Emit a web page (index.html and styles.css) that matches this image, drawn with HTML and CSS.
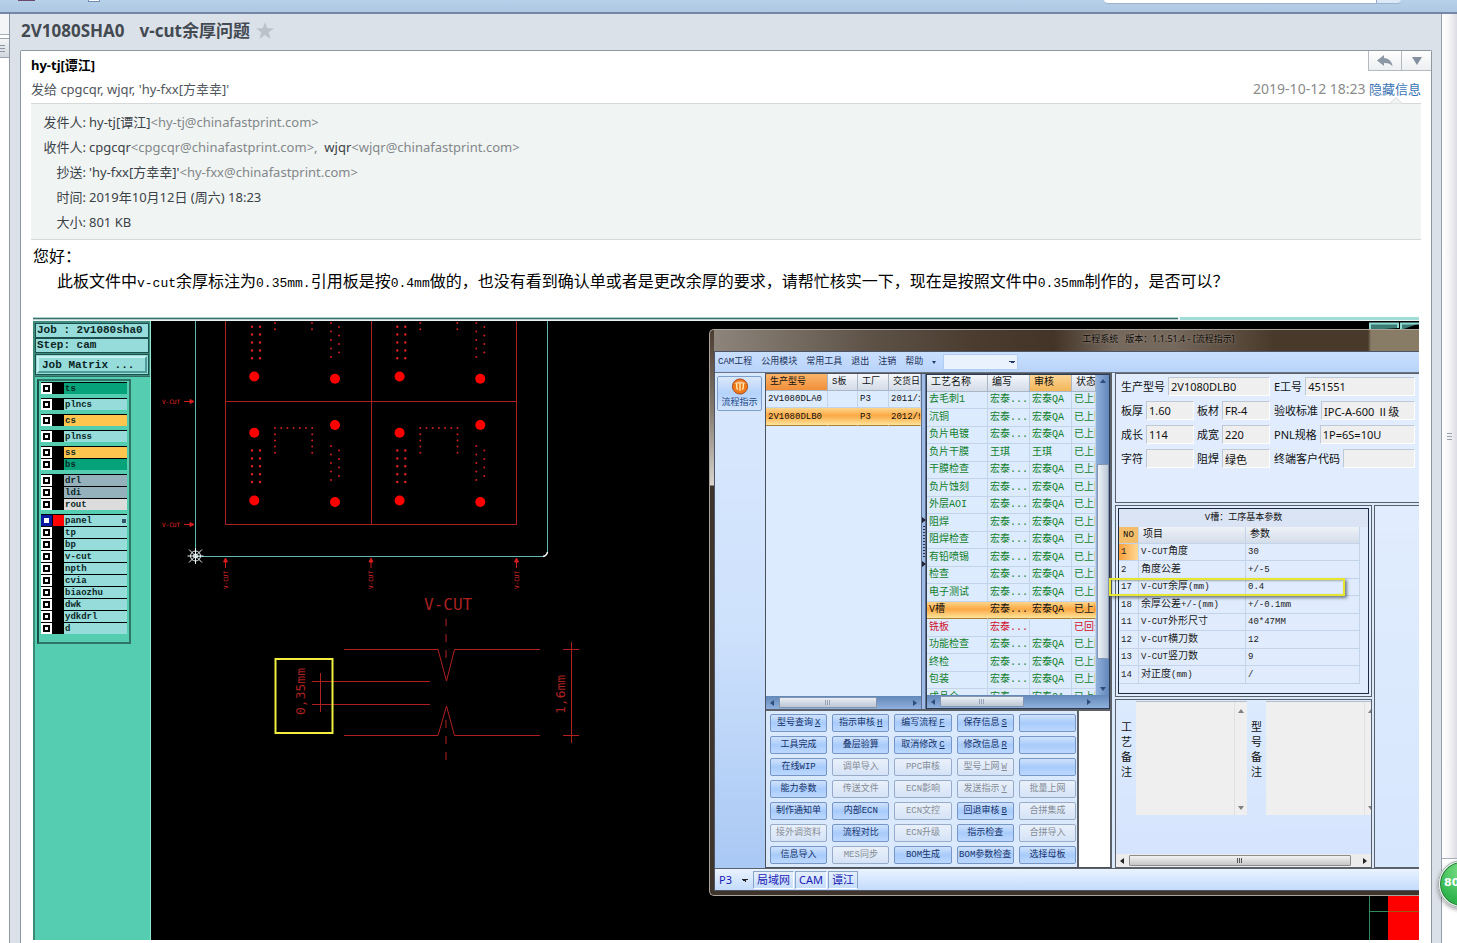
FILE: index.html
```
<!DOCTYPE html>
<html lang="zh-CN">
<head>
<meta charset="utf-8">
<title>2V1080SHA0 v-cut余厚问题</title>
<link rel="stylesheet" href="styles.css">
</head>
<body>
<header class="topbar">
  <span class="tb-mark"></span><span class="tb-box"></span><span class="tb-search"></span>
</header>
<div class="shell">
  <aside class="rail-left">
    <div class="rail-head"></div>
    <button class="rail-grip" aria-label="展开"><svg width="6" height="9" viewBox="0 0 6 9"><path d="M0 1.500h5M0 4.500h5M0 7.500h5" stroke="#8a95a5"/></svg></button>
  </aside>
  <main class="pane">
    <h1 class="subject"><span>2V1080SHA0</span><span>v-cut余厚问题</span>
      <svg width="18" height="18" viewBox="0 0 18 18"><path d="M9 0l2.300 6.200H18l-5.300 4.100L14.600 17 9 13 3.400 17l1.900-6.700L0 6.200h6.700z" fill="#bcc2ca"/></svg></h1>
    <article class="card">
      <div class="actions">
        <button aria-label="回复"><svg width="16" height="12" viewBox="0 0 16 12"><path d="M0 5.500L7 0v3c5 .300 8 3.500 8.600 8.500C13.500 8.700 11 7.800 7 8v3z" fill="#8c98a6"/></svg></button>
        <button aria-label="更多"><svg width="10" height="8" viewBox="0 0 10 8"><path d="M0 0h10L5 8z" fill="#8490a0"/></svg></button>
      </div>
      <div class="sender">hy-tj[谭江]</div>
      <div class="to-row"><span>发给 cpgcqr, wjqr, 'hy-fxx[方幸幸]'</span><span class="when"><time>2019-10-12 18:23</time> <a href="#info">隐藏信息</a></span></div>
      <section class="info" id="info">
        <svg class="notch" width="12" height="7" viewBox="0 0 12 7"><path d="M0 6.500L6 .500l6 6" fill="#f0f4f3" stroke="#d5d9d9"/></svg>
        <dl>
          <dt>发件人:</dt><dd>hy-tj[谭江]<em>&lt;hy-tj@chinafastprint.com&gt;</em></dd>
          <dt>收件人:</dt><dd>cpgcqr<em>&lt;cpgcqr@chinafastprint.com&gt;,</em>&nbsp; wjqr<em>&lt;wjqr@chinafastprint.com&gt;</em></dd>
          <dt>抄送:</dt><dd>'hy-fxx[方幸幸]'<em>&lt;hy-fxx@chinafastprint.com&gt;</em></dd>
          <dt>时间:</dt><dd>2019年10月12日 (周六) 18:23</dd>
          <dt>大小:</dt><dd>801 KB</dd>
        </dl>
      </section>
      <div class="letter">
        <p>您好：</p>
        <p class="indent">此板文件中<span class="lat">v-cut</span>余厚标注为<span class="lat">0.35mm.</span>引用板是按<span class="lat">0.4mm</span>做的，也没有看到确认单或者是更改余厚的要求，请帮忙核实一下，现在是按照文件中<span class="lat">0.35mm</span>制作的，是否可以？</p>
      </div>
      <div class="shot">
        <div class="strip"><span></span><span></span></div>
        <div class="cad">
          <div class="cam">
            <div class="job">
              <div class="job-line">Job : 2v1080sha0</div>
              <div class="job-line">Step: cam</div>
              <div class="job-btn"><button>Job Matrix ...</button></div>
            </div>
            <div class="layers">
              <div class="group"><label><input type="checkbox"><i></i><b class="green">ts</b></label></div>
              <div class="group"><label><input type="checkbox"><i></i><b>plncs</b></label></div>
              <div class="group"><label><input type="checkbox"><i></i><b class="gold">cs</b></label></div>
              <div class="group"><label><input type="checkbox"><i></i><b>plnss</b></label></div>
              <div class="group"><label><input type="checkbox"><i></i><b class="gold">ss</b></label><label><input type="checkbox"><i></i><b class="green">bs</b></label></div>
              <div class="group"><label><input type="checkbox"><i></i><b class="slate">drl</b></label><label><input type="checkbox"><i></i><b class="slate">ldi</b></label><label><input type="checkbox"><i></i><b class="pale">rout</b></label></div>
              <div class="group"><label class="current"><input type="checkbox" checked><i></i><b>panel<s></s></b></label><label><input type="checkbox"><i></i><b>tp</b></label><label><input type="checkbox"><i></i><b>bp</b></label><label><input type="checkbox"><i></i><b>v-cut</b></label><label><input type="checkbox"><i></i><b>npth</b></label><label><input type="checkbox"><i></i><b>cvia</b></label><label><input type="checkbox"><i></i><b>biaozhu</b></label><label><input type="checkbox"><i></i><b>dwk</b></label><label><input type="checkbox"><i></i><b>ydkdrl</b></label><label><input type="checkbox"><i></i><b>d</b></label></div>
            </div>
          </div>
          <svg class="board" width="560" height="619" viewBox="151 321 560 619">
            <defs>
              <g id="cell">
                <g fill="#f00"><circle cx="254.300" cy="376.500" r="5"/><circle cx="335" cy="378.700" r="5"/><circle cx="254.300" cy="432.700" r="5"/><circle cx="335" cy="425" r="5"/><circle cx="254.300" cy="500.500" r="5"/><circle cx="335" cy="502" r="5"/></g>
                <g stroke="#e02020" stroke-width="2.500" stroke-linecap="round" fill="none">
                  <path stroke-dasharray="0 7.900" d="M252 326.700V359M260 326.700V359M252 450.500V482.500M260 450.500V482.500"/>
                </g>
                <g stroke="#cc2020" stroke-width="2" stroke-linecap="round" fill="none">
                  <path stroke-dasharray="0 8.500" d="M331 323V358M339 327V353M331 446V481M339 450.500V477"/>
                  <path stroke-dasharray="0 6.200" d="M275 323V330M312 323V330M275 428H313M275 434.200V454M312.200 434.200V454"/>
                </g>
              </g>
              <path id="arrow" d="M0 0h6M6-2l4 2-4 2z" stroke="#d01c1c" fill="#e02020"/>
            </defs>
            <path d="M195.500 321V556.500H543Q547.500 556 547.500 551V321" fill="none" stroke="#5fb8b4"/>
            <path d="M543 556.500Q547 555.500 547.500 552" fill="none" stroke="#fff" stroke-width="1.500"/>
            <path d="M225.500 321V525M371.500 321V525M516.500 321V525M225 401.500H517M225 524.500H517" stroke="#a82222" fill="none"/>
            <use href="#cell"/><use href="#cell" x="145.300"/>
            <g stroke="#e8f4f4" fill="none"><circle cx="195.500" cy="556" r="5"/><circle cx="195.500" cy="556" r="2"/><path d="M187.500 556h16M195.500 548v16M189 549.500l13 13M202 549.500l-13 13"/></g>
            <use href="#arrow" x="184" y="401.500"/><use href="#arrow" x="184" y="524.500"/>
            <use href="#arrow" transform="translate(225.500 568) rotate(-90)"/><use href="#arrow" transform="translate(371 568) rotate(-90)"/><use href="#arrow" transform="translate(516.500 568) rotate(-90)"/>
            <g class="tiny">
              <text x="162" y="404">V-CUT</text><text x="162" y="527">V-CUT</text>
              <text transform="translate(228 589) rotate(-90)">V-CUT</text><text transform="translate(373 589) rotate(-90)">V-CUT</text><text transform="translate(519 589) rotate(-90)">V-CUT</text>
            </g>
            <path fill="none" stroke="#b02020" d="M344 649.500H438L446.500 681 454.500 649.500H540M344 735.500H438L446.500 706 454.500 735.500H540M312 681.500H430M312 704.500H430M320.500 673V712M571.500 642V743M563 649.500H579M563 735.500H579M446 618.500V626M446 634V642M446 650V658M446 720V728M446 736V744M446 752V760"/>
            <text class="big" x="424" y="610">V-CUT</text>
            <text class="dim" transform="translate(305 715) rotate(-90)">0,35mm</text>
            <text class="dim" transform="translate(565 714) rotate(-90)">1,6mm</text>
            <rect x="275.500" y="659" width="57" height="74" fill="none" stroke="#f2ee40" stroke-width="2"/>
          </svg>
          <svg class="corner" width="50" height="46" viewBox="0 0 50 46"><path d="M19 2h31v44H19z" fill="#f00"/><path d="M.500 0v46M0 17.500h50" stroke="#2f8a5a" fill="none"/><path d="M19 17.500h31" stroke="#a05a10"/></svg>
          <svg class="tabs" width="50" height="8" viewBox="0 0 50 8"><path d="M1 8V1.500h28V6M32 8V1.500h18" stroke="#8ed8d0" stroke-width="2" fill="#3c7a74"/></svg>
        </div>

        <section class="win">
          <div class="win-title"><span>工程系统&nbsp;&nbsp; 版本：1.1.51.4 - [流程指示]</span></div>
          <div class="win-body">
            <nav class="menu">
              <button><span class="n">CAM</span>工程</button><button>公用模块</button><button>常用工具</button><button>退出</button><button>注销</button><button>帮助</button><i class="caret"></i>
              <select aria-label="查找"><option></option></select>
            </nav>
            <div class="work">
              <div class="side">
                <button><svg width="18" height="18" viewBox="0 0 18 18"><circle cx="9" cy="9" r="8" fill="#ee7a1c" stroke="#a8441a"/><path d="M3 6a7 5 0 0 1 12 0z" fill="#fbc08a"/><path d="M5.500 5.500v4.500l1 2.500M9 5v8.500M12.500 5.500v4.500l-1 2.500" stroke="#ffe9a8" stroke-width="1.500" fill="none"/></svg><span>流程指示</span></button>
              </div>
              <div class="left">
                <div class="grids">
                  <div class="grid models">
                    <div class="view">
                      <table>
                        <colgroup><col style="width:62px"><col style="width:30px"><col style="width:31px"><col></colgroup>
                        <thead><tr><th class="hot">生产型号</th><th>S板</th><th>工厂</th><th>交货日</th></tr></thead>
                        <tbody><tr><td>2V1080DLA0</td><td></td><td>P3</td><td>2011/1</td></tr><tr class="sel"><td>2V1080DLB0</td><td></td><td>P3</td><td>2012/9</td></tr></tbody>
                      </table>
                    </div>
                    <div class="hbar"><i class="al"></i><span class="thumb"></span><i class="ar"></i></div>
                  </div>
                  <div class="split"><svg width="4" height="50" viewBox="0 0 4 50"><path d="M0 0l4 3-4 3zM0 44l4 3-4 3z" fill="#223"/><path d="M2 9V41" stroke="#334" stroke-width="2" stroke-dasharray="1 2"/></svg></div>
                  <div class="grid procs">
                    <div class="view">
                      <table>
                        <colgroup><col style="width:61px"><col style="width:42px"><col style="width:42px"><col></colgroup>
                        <thead><tr><th>工艺名称</th><th>编写</th><th class="warm">审核</th><th>状态</th></tr></thead>
                        <tbody>
                          <tr><td>去毛刺1</td><td>宏泰...</td><td>宏泰QA</td><td>已上网</td></tr>
                          <tr><td>沉铜</td><td>宏泰...</td><td>宏泰QA</td><td>已上网</td></tr>
                          <tr><td>负片电镀</td><td>宏泰...</td><td>宏泰QA</td><td>已上网</td></tr>
                          <tr><td>负片干膜</td><td>王琪</td><td>王琪</td><td>已上网</td></tr>
                          <tr><td>干膜检查</td><td>宏泰...</td><td>宏泰QA</td><td>已上网</td></tr>
                          <tr><td>负片蚀刻</td><td>宏泰...</td><td>宏泰QA</td><td>已上网</td></tr>
                          <tr><td>外层AOI</td><td>宏泰...</td><td>宏泰QA</td><td>已上网</td></tr>
                          <tr><td>阻焊</td><td>宏泰...</td><td>宏泰QA</td><td>已上网</td></tr>
                          <tr><td>阻焊检查</td><td>宏泰...</td><td>宏泰QA</td><td>已上网</td></tr>
                          <tr><td>有铅喷锡</td><td>宏泰...</td><td>宏泰QA</td><td>已上网</td></tr>
                          <tr><td>检查</td><td>宏泰...</td><td>宏泰QA</td><td>已上网</td></tr>
                          <tr><td>电子测试</td><td>宏泰...</td><td>宏泰QA</td><td>已上网</td></tr>
                          <tr class="sel"><td>V槽</td><td>宏泰...</td><td>宏泰QA</td><td>已上网</td></tr>
                          <tr class="back"><td>铣板</td><td>宏泰...</td><td></td><td>已回退</td></tr>
                          <tr><td>功能检查</td><td>宏泰...</td><td>宏泰QA</td><td>已上网</td></tr>
                          <tr><td>终检</td><td>宏泰...</td><td>宏泰QA</td><td>已上网</td></tr>
                          <tr><td>包装</td><td>宏泰...</td><td>宏泰QA</td><td>已上网</td></tr>
                          <tr><td>成品仓</td><td>宏泰...</td><td>宏泰QA</td><td>已上网</td></tr>
                        </tbody>
                      </table>
                    </div>
                    <div class="vbar"><i class="au"></i><span class="thumb"></span><i class="ad"></i></div>
                    <div class="hbar"><i class="al"></i><span class="thumb"></span><i class="ar"></i></div>
                  </div>
                </div>
                <div class="cmds">
                  <div class="keys">
                    <button>型号查询<u>X</u></button><button>指示审核<u>H</u></button><button>编写流程<u>F</u></button><button>保存信息<u>S</u></button><button aria-label="空"></button>
                    <button>工具完成</button><button>叠层验算</button><button>取消修改<u>C</u></button><button>修改信息<u>R</u></button><button aria-label="空"></button>
                    <button>在线WIP</button><button disabled>调单导入</button><button disabled>PPC审核</button><button disabled>型号上网<u>W</u></button><button aria-label="空"></button>
                    <button>能力参数</button><button disabled>传送文件</button><button disabled>ECN影响</button><button disabled>发送指示<u>Y</u></button><button disabled>批量上网</button>
                    <button>制作通知单</button><button>内部ECN</button><button disabled>ECN文控</button><button>回退审核<u>B</u></button><button disabled>合拼集成</button>
                    <button disabled>接外调资料</button><button>流程对比</button><button disabled>ECN升级</button><button>指示检查</button><button disabled>合拼导入</button>
                    <button>信息导入</button><button disabled>MES同步</button><button>BOM生成</button><button>BOM参数检查</button><button>选择母板</button>
                  </div>
                  <div class="blank"></div>
                </div>
              </div>
              <div class="right">
                <form class="spec">
                  <div class="line"><div class="half"><label for="f1">生产型号</label><input id="f1" value="2V1080DLB0"></div><div class="rest"><label for="f2">E工号</label><input id="f2" value="451551"></div></div>
                  <div class="line"><div class="half"><label for="f3">板厚</label><input id="f3" value="1.60"><label for="f4">板材</label><input id="f4" value="FR-4"></div><div class="rest"><label for="f5">验收标准</label><input id="f5" value="IPC-A-600 Ⅱ级"></div></div>
                  <div class="line"><div class="half"><label for="f6">成长</label><input id="f6" value="114"><label for="f7">成宽</label><input id="f7" value="220"></div><div class="rest"><label for="f8">PNL规格</label><input id="f8" value="1P=6S=10U"></div></div>
                  <div class="line"><div class="half"><label for="f9">字符</label><input id="f9"><label for="f10">阻焊</label><input id="f10" value="绿色"></div><div class="rest"><label for="f11">终端客户代码</label><input id="f11"></div></div>
                </form>
                <div class="lower">
                  <div class="stack">
                    <div class="params">
                      <div class="params-in">
                        <div class="cap"><span class="n">V</span>槽：工序基本参数</div>
                        <table>
                          <colgroup><col style="width:20px"><col style="width:107px"><col></colgroup>
                          <thead><tr><th class="warm"><span class="n">NO</span></th><th>项目</th><th>参数</th></tr></thead>
                          <tbody>
                            <tr><td class="hot"><span class="n">1</span></td><td><span class="n">V-CUT</span>角度</td><td><span class="n">30</span></td></tr>
                            <tr><td><span class="n">2</span></td><td>角度公差</td><td><span class="n">+/-5</span></td></tr>
                            <tr><td><span class="n">17</span></td><td><span class="n">V-CUT</span>余厚<span class="n">(mm)</span></td><td><span class="n">0.4</span></td></tr>
                            <tr><td><span class="n">18</span></td><td>余厚公差<span class="n">+/-(mm)</span></td><td><span class="n">+/-0.1mm</span></td></tr>
                            <tr><td><span class="n">11</span></td><td><span class="n">V-CUT</span>外形尺寸</td><td><span class="n">40*47MM</span></td></tr>
                            <tr><td><span class="n">12</span></td><td><span class="n">V-CUT</span>横刀数</td><td><span class="n">12</span></td></tr>
                            <tr><td><span class="n">13</span></td><td><span class="n">V-CUT</span>竖刀数</td><td><span class="n">9</span></td></tr>
                            <tr><td><span class="n">14</span></td><td>对正度<span class="n">(mm)</span></td><td><span class="n">/</span></td></tr>
                          </tbody>
                        </table>
                      </div>
                      <div class="mark"></div>
                    </div>
                    <div class="notes">
                      <div class="notes-row">
                        <label for="n1">工艺备注</label><div class="area"><textarea id="n1"></textarea><span class="track"><i class="au"></i><i class="ad"></i></span></div>
                        <label for="n2">型号备注</label><div class="area"><textarea id="n2"></textarea><span class="track"><i class="au"></i><i class="ad"></i></span></div>
                      </div>
                      <div class="hbar plain"><i class="al"></i><span class="thumb"></span><i class="ar"></i></div>
                    </div>
                  </div>
                  <div class="empty"></div>
                </div>
              </div>
            </div>
            <footer class="status"><select aria-label="工厂"><option>P3</option></select><span>局域网</span><span>CAM</span><span>谭江</span></footer>
          </div>
        </section>
      </div>
    </article>
  </main>
  <aside class="rail-right"><div class="rail-top"><svg width="6" height="9" viewBox="0 0 6 9"><path d="M0 1.500h5M0 4.500h5M0 7.500h5" stroke="#9aa2ae"/></svg></div></aside>
</div>
<div class="ball">80</div>
</body>
</html>
```
FILE: styles.css
```
* { box-sizing: border-box; }
body {
  margin: 0; height: 100vh; overflow: hidden; position: relative;
  display: flex; flex-direction: column;
  font: 13px/25px "Noto Sans", "Noto Sans CJK SC", sans-serif; color: #3b4248; background: #dbe1e8;
}
button, input, select, textarea { font: inherit; color: inherit; margin: 0; padding: 0; border: 0; border-radius: 0; background: none; appearance: none; }
p, dl, dd, h1 { margin: 0; }
em, i { font-style: normal; }
svg { display: block; }

/* mail client chrome */
.topbar { flex: none; height: 14px; display: flex; align-items: flex-start; padding: 0 56px 0 18px; background: linear-gradient(#b7d1ea, #aec8e4); border-bottom: 2px solid #7488a5; }
.tb-mark { width: 17px; height: 1px; background: #6b4a6c; }
.tb-box { width: 12px; height: 2px; margin-left: 53px; background: #fff; border: solid #6f8fb4; border-width: 0 1px 1px; }
.tb-search { width: 297px; height: 4px; margin-left: auto; background: linear-gradient(90deg, #fff 272px, #93aac8 272px, #93aac8 273px, #dce9f6 273px); border-radius: 0 0 6px 6px; border-bottom: 1px solid #9cb2ce; }
.shell { flex: 1; min-height: 0; display: flex; }
.rail-left { flex: none; width: 10px; background: #fff; border-right: 1px solid #8f99a5; }
.rail-head { height: 21px; background: #f3f5f7; border-bottom: 1px solid #a9b0b8; }
.rail-grip { display: block; width: 9px; height: 20px; margin-top: 3px; background: linear-gradient(#f4f6f8, #d0d6dd); border: solid #9aa3ae; border-width: 1px 0; }
.rail-right { flex: none; width: 16px; background: #fff; border-left: 1px solid #949eaa; }
.rail-top { height: 845px; padding: 418px 0 0 5px; background: linear-gradient(90deg, #fff, #f4f4f6 50%, #dcdde4); border-bottom: 1px solid #a8aeb8; }
.pane { flex: 1; min-width: 0; padding: 0 9px 0 10px; display: flex; flex-direction: column; background: #dbe1e8; }
.subject { flex: none; height: 36px; display: flex; align-items: center; gap: 15px; padding: 0 0 2px 1px; font-size: 17px; line-height: 34px; font-weight: 700; color: #434a52; }
.subject svg { margin-left: -9px; }
.card { position: relative; flex: 1; padding: 0 10px; background: #fff; border: 1px solid #8f979f; border-bottom: 0; border-radius: 2px 2px 0 0; }
.actions { position: absolute; top: 0; right: 0; display: flex; }
.actions button { width: 33px; height: 20px; display: grid; place-items: center; background: linear-gradient(#fff, #eceef0); border: solid #b5bac0; border-width: 0 0 1px 1px; }
.actions button + button { width: 30px; }
.sender { padding-top: 2px; line-height: 24px; font-weight: 700; color: #000; }
.to-row { display: flex; justify-content: space-between; padding-bottom: 2px; line-height: 24px; color: #50565c; }
.when { color: #8b8b8b; }
.when time { font-size: 14px; }
.when a { color: #3a74b4; text-decoration: none; }
.info { position: relative; padding: 6px 11px 4px; background: #f0f4f3; border: solid #d5d9d9; border-width: 1px 0; }
.notch { position: absolute; right: 19px; top: -7px; }
.info dl { display: grid; grid-template-columns: 44px 1fr; column-gap: 3px; }
.info dt { text-align: right; white-space: nowrap; }
.info em { color: #83878a; }
.letter { padding: 6px 2px 0; font: 16px/25px "Liberation Mono", "Noto Sans CJK SC", monospace; color: #000; white-space: nowrap; }
.letter p { height: 25px; }
.indent { padding-left: 24px; }
.lat { font-size: 13px; }

/* desktop capture */
.shot { position: relative; overflow: hidden; margin: 21px 2px 0; background: #000; font: 10px/14px "Liberation Mono", "Noto Sans CJK SC", monospace; color: #222; }
.strip { display: flex; gap: 2px; height: 4px; background: #e8f4f4; }
.strip span { width: 1145px; height: 3px; background: linear-gradient(#a8d4d0 1px, #3e6f6f 1px, #3e6f6f 2px, #b9c9c9 2px); }
.strip span + span { flex: 1; background: #a2dcd8; }
.cad { display: flex; position: relative; }
.cam { flex: none; width: 118px; background: #54cdb0; border-left: 2px solid #3b8a78; border-right: 1px solid #8fe8d0; font-weight: 700; color: #0b2624; }
.job { background: #3f8c80; padding: 2px 1px 1px 0; border-bottom: 1px solid #2d6b60; font-size: 11px; }
.job-line { height: 15px; padding-left: 1px; line-height: 13px; background: #96dcda; border: 1px solid #1d4f4c; white-space: nowrap; }
.job-btn { margin-top: 1px; height: 21px; padding: 1px; background: #96dcda; border: 1px solid #1d4f4c; }
.job-btn button { display: block; width: 100%; height: 17px; padding-left: 3px; text-align: left; background: #96dcda; border: 2px solid; border-color: #c5f2ee #4f9c98 #4f9c98 #c5f2ee; line-height: 12px; }
.layers { width: 94px; margin: 2px 0 0 2px; padding: 1px 2px 8px; border: 2px solid #2d7466; border-color: #2d7466 #2d7466 #2d7466 #1d4f44; }
.group { background: #000; }
.group + .group { margin-top: 4px; }
.layers label { display: flex; height: 12px; border-top: 1px solid #000; }
.layers input { width: 11px; height: 11px; background: #fff; border: 2px solid #fff; box-shadow: inset 0 0 0 2px #000; }
.layers i { width: 12px; }
.layers b { flex: 1; display: flex; align-items: center; padding-left: 1px; font-size: 9px; line-height: 10px; height: 11px; background: #96dcda; }
.layers .green { background: #06a37a; }
.layers .gold { background: #ffc54f; }
.layers .slate { background: #95b1bc; }
.layers .pale { background: #dcdcdc; }
.layers .current input { border: 3px solid #0818a0; background: #fff; box-shadow: none; }
.layers .current i { background: #f00; border-left: 1px solid #000; }
.layers s { width: 4px; height: 4px; margin: 0 1px 0 auto; background: #356; }
.board { flex: none; }
.board text { fill: #e02828; font-family: "DejaVu Sans Mono", monospace; font-size: 13px; font-weight: 400; }
.board .tiny text { font-size: 6px; }
.board .big { font-size: 16px; fill: #a82020; }
.board .dim { fill: #a82020; }
.corner { position: absolute; right: 0; bottom: 0; }
.tabs { position: absolute; right: 0; top: 1px; }

/* process window */
.win { position: absolute; left: 676px; right: 0; top: 12px; bottom: 44px; padding: 0 0 4px 4px; display: flex; flex-direction: column; border: 1px solid #aba49b; border-right: 0; border-radius: 5px 0 0 5px; background: linear-gradient(#4b3c30, #837a70 80px, #d8d5d0 155px, #3f342b 156px, #3f342b); }
.win-title { flex: none; height: 21px; padding: 0 0 0 184px; text-align: center; line-height: 18px; font-size: 9px; font-family: "Noto Sans", "Noto Sans CJK SC", sans-serif; color: #0c0a08; background: linear-gradient(90deg, transparent 654px, #887c66 657px), linear-gradient(90deg, #8d857c, #5d5146 160px, #4b3c2f 260px, #433427 340px, #75685c 400px, #75685c 460px, #49392a 560px); }
.win-title span { text-shadow: 0 0 3px #a59a8d; }
.win-body { flex: 1; min-height: 0; display: flex; flex-direction: column; background: #dbe9fd; border: 1px solid #4d5566; border-right: 0; }
.n { font-size: 9px; }
.menu { flex: none; height: 20px; display: flex; align-items: center; gap: 9px; padding-left: 3px; background: linear-gradient(#c9dffe, #b8d3fa); font-size: 9px; color: #1d3158; }
.menu button { white-space: nowrap; }
.caret { border: solid transparent; border-width: 3px 2px 0; border-top-color: #223a66; }
.menu select { width: 75px; height: 16px; margin-left: -2px; border: 1px solid #b0cdf2; background: linear-gradient(45deg, transparent 50%, #223a66 50%) 65px 6px / 3px 3px no-repeat, linear-gradient(135deg, #223a66 50%, transparent 50%) 68px 6px / 3px 3px no-repeat, #eaf2fd; }
.work { flex: 1; min-height: 0; display: flex; border-top: 1px solid #6c7482; }
.side { flex: none; width: 50px; padding: 3px 2px; background: linear-gradient(#d8e8fd, #cfe2fc 50%, #a9c8f4); }
.side button { width: 45px; height: 35px; display: flex; flex-direction: column; align-items: center; gap: 2px; padding-top: 1px; font-size: 9px; color: #1c4a86; line-height: 13px; background: linear-gradient(#dbe8fa, #b4d2fb 50%, #d3e5fd); border: 1px solid #7f9fcb; border-radius: 2px; white-space: nowrap; }
.left { flex: none; width: 347px; display: flex; flex-direction: column; border: 1px solid #4c525c; border-right: 2px solid #5c6068; }
.grids { flex: 1; min-height: 0; display: flex; border-bottom: 2px solid #5c6068; }
.grid { min-width: 0; background: #dcebfd; display: grid; grid-template: 1fr 13px / 1fr; }
.models { width: 155px; }
.procs { flex: 1; grid-template: 1fr 13px / 1fr 13px; border: 1px solid #2e3a50; }
.split { width: 5px; display: grid; place-items: center; background: #9dbbe6; border: solid #5d6f8c; border-width: 0 1px; }
.view { overflow: hidden; min-height: 0; height: 100%; contain: size; }
table { width: 100%; table-layout: fixed; border-collapse: separate; border-spacing: 0; }
th, td { padding: 0 0 0 2px; height: 17px; line-height: 14px; text-align: left; font-weight: 400; white-space: nowrap; overflow: hidden; border: solid #c3d3ea; border-width: 0 1px 1px 0; }
tbody tr:nth-child(even) td { height: 18px; }
.grid th { height: 17px; line-height: 16px; padding-left: 4px; color: #111; background: linear-gradient(#f4f7fb, #d3dbe7); border-color: #a9b6c8; font-size: 10px; }
.grid .hot { background: linear-gradient(#fbb469, #f08f3a); }
.warm, .grid .warm { background: linear-gradient(#fcd596, #f3b658); }
.models .view th { font-size: 9px; }
.models td { font-size: 9px; color: #111; }
.procs td { color: #12802c; }
.procs .back td { color: #d0102a; }
.grid .sel td { color: #111; background: linear-gradient(#fdd58a, #fba945 45%, #ffe49a); border-color: #a98238 transparent #a98238; }
.hbar { display: flex; align-items: center; gap: 5px; padding: 0 4px; background: linear-gradient(#6288b9, #8fb0dc); }
.procs .hbar { grid-column: 1 / 3; }
.thumb { background: linear-gradient(#e5ebf4, #b9c5d6); border: 1px solid #8496b0; border-radius: 1px; }
.hbar .thumb { width: 98px; height: 11px; margin-right: auto; background: repeating-linear-gradient(90deg, #98a4b5 0 1px, transparent 1px 2px) center / 6px 5px no-repeat, linear-gradient(#e9eef5, #bcc6d4); }
.procs .hbar .thumb { width: 84px; }
.procs .hbar .ar { margin-right: 14px; }
.al, .ar { border: solid transparent; border-width: 3px 4px 3px 0; border-right-color: #2f4c7c; }
.ar { border-width: 3px 0 3px 4px; border-left-color: #2f4c7c; }
.au, .ad { border: solid transparent; border-width: 0 3px 4px; border-bottom-color: #2f4c7c; }
.ad { border-width: 4px 3px 0; border-top-color: #2f4c7c; }
.vbar { display: flex; flex-direction: column; align-items: center; padding: 4px 0; background: linear-gradient(90deg, #8fb0dc, #6288b9); }
.vbar .thumb { width: 12px; height: 195px; margin: auto 0 28px; background: linear-gradient(90deg, #eef2f8, #bcc8d8); }
.cmds { flex: none; display: flex; }
.keys { flex: 1; display: grid; grid-template-columns: repeat(5, 1fr); gap: 4px 5px; padding: 3px 1px 3px 4px; background: #dbe9fd; border-right: 2px solid #5c6068; }
.keys button { height: 18px; line-height: 14px; font-size: 9px; white-space: nowrap; color: #16336a; background: linear-gradient(#cfe2fc, #a8cbfb 50%, #bcd8fe); border: 1px solid #7596c6; border-radius: 2px; }
.keys button:disabled { color: #858c96; background: linear-gradient(#e9f0fa, #d5e3f7); border-color: #98abc8; }
.keys u { margin-left: 2px; }
.blank { width: 31px; background: #fff; }
.right { flex: 1; min-width: 0; margin-left: 3px; display: flex; flex-direction: column; gap: 2px; }
.spec { flex: none; height: 130px; padding: 3px 4px 0 5px; display: flex; flex-direction: column; gap: 5px; background: #e1edfe; border: solid #5c6068; border-width: 1px 0 1px 1px; font: 11px/17px "Noto Sans", "Noto Sans CJK SC", sans-serif; color: #111; }
.line, .half, .rest { display: flex; align-items: center; gap: 3px; }
.line { gap: 4px; height: 19px; }
.half { flex: none; width: 149px; }
.rest { flex: 1; min-width: 0; }
.spec label { flex: none; }
.spec input { flex: 1; min-width: 0; width: 0; height: 19px; padding-left: 2px; background: #efefef; border: 1px solid; border-color: #bfc9d6 #fff #fff #bfc9d6; }
.lower { flex: 1; min-height: 0; display: flex; gap: 2px; }
.stack { flex: none; width: 257px; display: flex; flex-direction: column; gap: 2px; }
.empty { flex: 1; background: linear-gradient(#e1edfe, #d6e6fd); border: solid #5c6068; border-width: 1px 0 1px 1px; }
.params { position: relative; height: 192px; padding: 2px; border: 1px solid #5c6068; background: #e1edfe; }
.params-in { height: 186px; border: 1px solid #1d2b45; background: #e0ecfd; }
.cap { height: 18px; line-height: 18px; text-align: center; color: #111; font-size: 9px; background: #dbe4f4; }
.params table { width: 241px; color: #222; }
.params th { padding-left: 4px; background: linear-gradient(#eef2f8, #d3dce9); color: #111; }
.params .warm { background: #f3bd6a; }
.params .hot { background: linear-gradient(90deg, #f79f3c, #ffd993); }
.mark { position: absolute; left: -7px; top: 72px; width: 236px; height: 18px; border: 2px solid #e6e630; box-shadow: 2px 2px 3px rgba(40, 50, 60, .6), inset 1px 1px 2px rgba(60, 70, 60, .4); }
.notes { flex: 1; min-height: 0; overflow: hidden; display: flex; flex-direction: column; justify-content: space-between; border: 1px solid #5c6068; background: linear-gradient(#dceafe, #d5e4fd); }
.notes-row { display: flex; padding: 1px 0 0 5px; font: 11px/15px "Noto Sans", "Noto Sans CJK SC", sans-serif; color: #111; }
.notes-row label { flex: none; width: 11px; padding-top: 18px; white-space: normal; word-break: break-all; }
.area { flex: none; width: 111px; height: 114px; margin: 0 4px; display: flex; background: #efefef; border-top: 1px solid #b5bfcc; }
.area textarea { flex: 1; min-width: 0; resize: none; overflow: hidden; }
.track { width: 13px; padding: 7px 3px 5px; display: flex; flex-direction: column; justify-content: space-between; border-left: 1px solid #e0e0e0; }
.track .au { border-bottom-color: #808080; }
.track .ad { border-top-color: #808080; }
.plain { height: 13px; background: #ececec; }
.plain .thumb { flex: 1; height: 11px; margin: 0 7px 0 0; background: repeating-linear-gradient(90deg, #555 0 1px, transparent 1px 2px) center / 6px 5px no-repeat, linear-gradient(#f2f2f2, #c6c6c6); border-color: #8c8c8c; }
.plain .al { border-right-color: #222; }
.plain .ar { border-left-color: #222; }
.status { flex: none; height: 22px; display: flex; align-items: center; gap: 1px; background: linear-gradient(#eaf3ff, #c3dbfc); border-top: 1px solid #5c6068; font: 11px/15px "Noto Sans", "Noto Sans CJK SC", sans-serif; color: #1a1ab4; }
.status select { width: 37px; height: 18px; padding-left: 4px; background: linear-gradient(45deg, transparent 50%, #222 50%) 27px 8px / 3px 3px no-repeat, linear-gradient(135deg, #222 50%, transparent 50%) 30px 8px / 3px 3px no-repeat; }
.status span { height: 18px; padding: 0 3px; border: 1px solid; border-color: #8ba4c8 #fff #fff #8ba4c8; }
.status span:last-child { border-right-color: #8ba4c8; }

/* floating meter */
.ball { position: absolute; right: -29px; top: 860px; width: 48px; height: 48px; padding-left: 4px; border-radius: 50%; font: 700 11px/42px "DejaVu Sans", sans-serif; color: #fff; background: radial-gradient(circle at 50% 20%, #7bdf86, #2fb44c 70%); border: 2px solid #f4f6f4; outline: 1px solid #9aa; outline-offset: -1px; box-shadow: inset 0 0 0 1px #2c7a3c, 0 2px 4px rgba(0, 0, 0, .4); }
```
